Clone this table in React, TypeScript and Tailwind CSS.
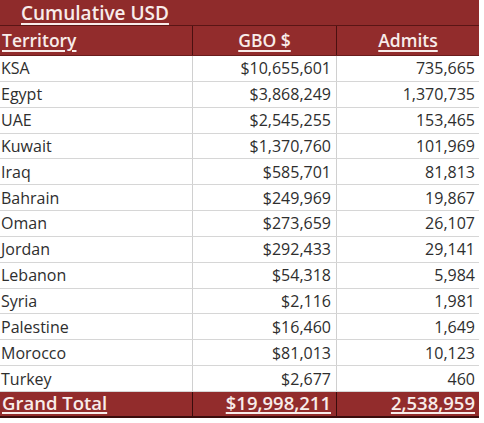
import React from 'react';

const rows: [string, string, string][] = [
  ['KSA', '$10,655,601', '735,665'],
  ['Egypt', '$3,868,249', '1,370,735'],
  ['UAE', '$2,545,255', '153,465'],
  ['Kuwait', '$1,370,760', '101,969'],
  ['Iraq', '$585,701', '81,813'],
  ['Bahrain', '$249,969', '19,867'],
  ['Oman', '$273,659', '26,107'],
  ['Jordan', '$292,433', '29,141'],
  ['Lebanon', '$54,318', '5,984'],
  ['Syria', '$2,116', '1,981'],
  ['Palestine', '$16,460', '1,649'],
  ['Morocco', '$81,013', '10,123'],
  ['Turkey', '$2,677', '460'],
];

export default function App() {
  return (
    <div className="w-[484px] h-[423px] bg-white font-['Open_Sans','Lato',sans-serif] text-[#2e2e2e]">
      <div className="w-[479px]">
        <div className="h-[26px] bg-[#8f2b2b] border-b border-[#5a1515] flex items-center pl-[21px]">
          <span className="text-[19px] leading-[24px] font-semibold text-[#f8ecea] underline underline-offset-[3px] decoration-[1.5px]">
            Cumulative USD
          </span>
        </div>
        <div className="h-[30px] bg-[#922c2c] grid grid-cols-[193px_144px_1fr] text-[17.5px] font-semibold text-[#f8ecea] border-b border-[#6a1c1c]">
          <div className="flex items-center pl-[2px] border-r border-[#4a1010]">
            <span className="underline underline-offset-[3px] decoration-[1.5px]">Territory</span>
          </div>
          <div className="flex items-center justify-center border-r border-[#4a1010]">
            <span className="underline underline-offset-[3px] decoration-[1.5px]">GBO $</span>
          </div>
          <div className="flex items-center justify-center">
            <span className="underline underline-offset-[3px] decoration-[1.5px]">Admits</span>
          </div>
        </div>
        {rows.map(([name, gbo, admits]) => (
          <div
            key={name}
            className="h-[25.85px] grid grid-cols-[193px_144px_1fr] text-[16px] border-b border-[#d6d6d6]"
          >
            <div className="flex items-center pl-[1px] border-r border-[#d0d0d0]">{name}</div>
            <div className="flex items-center justify-end pr-[5px] border-r border-[#d0d0d0]">{gbo}</div>
            <div className="flex items-center justify-end pr-[4px]">{admits}</div>
          </div>
        ))}
        <div className="h-[26px] bg-[#922c2c] grid grid-cols-[193px_144px_1fr] text-[18.5px] leading-[22px] font-semibold text-[#f8ecea] border-b-2 border-[#3a0c0c]">
          <div className="flex items-start pl-[2px] border-r border-[#3a0c0c]">
            <span className="underline underline-offset-[2px] decoration-[1.5px]">Grand Total</span>
          </div>
          <div className="flex items-start justify-end pr-[5px] border-r border-[#3a0c0c]">
            <span className="underline underline-offset-[2px] decoration-[1.5px]">$19,998,211</span>
          </div>
          <div className="flex items-start justify-end pr-[4px]">
            <span className="underline underline-offset-[2px] decoration-[1.5px]">2,538,959</span>
          </div>
        </div>
      </div>
    </div>
  );
}
